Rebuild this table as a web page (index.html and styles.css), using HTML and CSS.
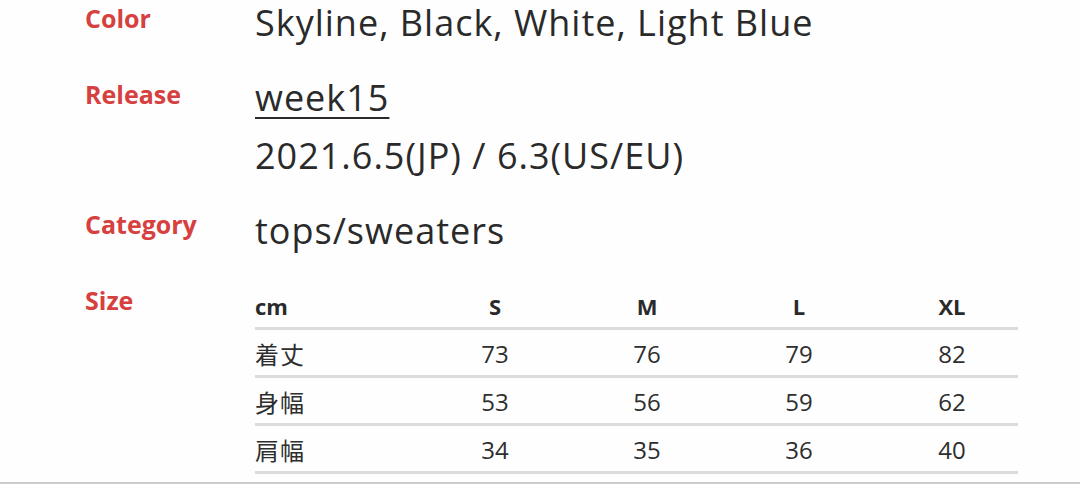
FILE: index.html
```html
<!DOCTYPE html>
<html lang="ja">
<head>
<meta charset="utf-8">
<title>Spec</title>
<link rel="stylesheet" href="styles.css">
</head>
<body>
<main class="spec">
  <div class="row">
    <div class="label">Color</div>
    <div class="value">Skyline, Black, White, Light Blue</div>
  </div>
  <div class="row">
    <div class="label label-release">Release</div>
    <div class="value">
      <div class="line"><a class="week" href="#">week15</a></div>
      <div class="line line-date">2021.6.5(JP) / 6.3(US/EU)</div>
    </div>
  </div>
  <div class="row">
    <div class="label label-category">Category</div>
    <div class="value">tops/sweaters</div>
  </div>
  <div class="row row-size">
    <div class="label label-size">Size</div>
    <div class="size-table">
      <div class="tr th">
        <div class="td first">cm</div>
        <div class="td">S</div>
        <div class="td">M</div>
        <div class="td">L</div>
        <div class="td last">XL</div>
      </div>
      <div class="tr">
        <div class="td first cjk">着丈</div>
        <div class="td">73</div>
        <div class="td">76</div>
        <div class="td">79</div>
        <div class="td last">82</div>
      </div>
      <div class="tr">
        <div class="td first cjk">身幅</div>
        <div class="td">53</div>
        <div class="td">56</div>
        <div class="td">59</div>
        <div class="td last">62</div>
      </div>
      <div class="tr">
        <div class="td first cjk">肩幅</div>
        <div class="td">34</div>
        <div class="td">35</div>
        <div class="td">36</div>
        <div class="td last">40</div>
      </div>
    </div>
  </div>
</main>
<div class="rule"></div>
</body>
</html>
```
FILE: styles.css
```css
html, body {
  margin: 0;
  padding: 0;
  background: #fefefe;
}
body {
  width: 1080px;
  height: 485px;
  overflow: hidden;
  font-family: "Open Sans", "Noto Sans", "Noto Sans CJK JP", sans-serif;
  color: #2a2a2a;
}
.spec {
  display: flex;
  flex-direction: column;
  gap: 31px;
  padding: 1px 0 0 85px;
  height: 473px;
  box-sizing: border-box;
}
.row {
  display: flex;
  align-items: flex-start;
}
.label {
  width: 170px;
  flex: none;
  font-size: 25px;
  font-weight: 700;
  line-height: 34px;
  color: #d6403f;
}
.label-release { margin-top: 1px; }
.label-category { margin-top: -2px; }
.label-size { margin-top: 1px; }
.value {
  font-size: 36px;
  line-height: 44px;
  letter-spacing: 1px;
  white-space: nowrap;
}
.line-date { margin-top: 14px; }
.week {
  color: inherit;
  text-decoration: underline;
  text-decoration-thickness: 2px;
  text-underline-offset: 6px;
}
.row-size { margin-top: -2px; }
.size-table {
  width: 763px;
}
.tr {
  display: grid;
  grid-template-columns: 164px 152px 152px 152px 143px;
  height: 48px;
  box-sizing: border-box;
  border-bottom: 3px solid #dcdcdc;
  padding-top: 2px;
  font-size: 24px;
  line-height: 43px;
  color: #2e2e2e;
}
.th {
  font-weight: 700;
  font-size: 22px;
  padding-top: 4px;
  line-height: 41px;
  color: #2a2a2a;
}
.td {
  text-align: center;
  white-space: nowrap;
}
.td.first {
  text-align: left;
}
.td.last {
  padding-left: 11px;
}
.cjk {
  font-family: "Noto Sans CJK JP", sans-serif;
  font-size: 24px;
  letter-spacing: 1px;
}
.rule {
  margin-top: 9px;
  height: 2px;
  background: #cccccc;
}
```
